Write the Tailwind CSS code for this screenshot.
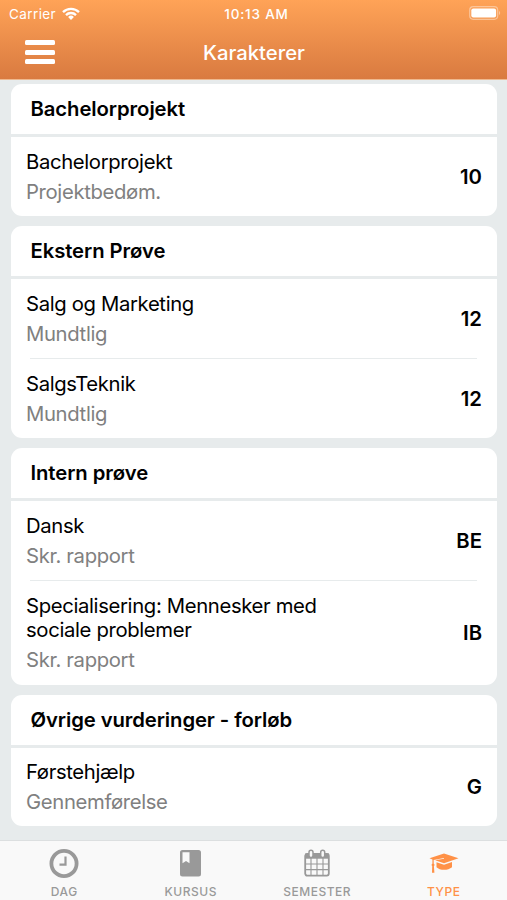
<!DOCTYPE html>
<html lang="da">
<head>
  <meta charset="UTF-8">
  <title>Karakterer</title>
  <script src="https://cdn.jsdelivr.net/npm/@tailwindcss/browser@4"></script>
</head>
<body class="flex h-[900px] w-[507px] flex-col overflow-hidden bg-[#e7ebec] font-['Inter','Liberation_Sans',sans-serif] text-black">

  <!-- Header -->
  <header class="h-20 shrink-0 border-b border-[#efb98f] bg-linear-to-b from-[#ffa357] to-[#d97a40] text-white">
    <div class="grid h-7 grid-cols-3 items-center pr-[6px] pl-[9px] text-[13.5px]">
      <div class="flex items-center gap-[6px]">
        <span class="tracking-[0.4px]">Carrier</span>
        <svg class="-mt-[2px] h-[13px] w-[18px]" viewBox="0 0 18 13" fill="none" stroke="currentColor" stroke-width="2.3">
          <path d="M1 5.1a11.3 11.3 0 0 1 16 0M4 8.1a7 7 0 0 1 10 0"/>
          <path d="M9 13l-2.9-3a4.1 4.1 0 0 1 5.8 0z" fill="currentColor" stroke="none"/>
        </svg>
      </div>
      <span class="pl-[3px] text-center text-[13.5px] font-medium tracking-[0.8px]">10:13 AM</span>
      <svg class="-mt-[2px] h-[14px] w-[32px] justify-self-end" viewBox="0 0 32 14" fill="none">
        <rect x=".7" y=".7" width="28" height="12.6" rx="3.5" stroke="white" stroke-opacity=".4" stroke-width="1.2"/>
        <rect x="2.3" y="2.4" width="24.8" height="9.2" rx="2" fill="white"/>
        <path d="M30 5v4c1.6-.6 1.6-3.4 0-4z" fill="white" fill-opacity=".4"/>
      </svg>
    </div>
    <div class="grid h-12 grid-cols-3 items-center px-[25px]">
      <div class="flex w-[30px] flex-col gap-[4.5px]">
        <span class="h-[5px] rounded-[1.5px] bg-white"></span>
        <span class="h-[5px] rounded-[1.5px] bg-white"></span>
        <span class="h-[5px] rounded-[1.5px] bg-white"></span>
      </div>
      <h1 class="pt-[2px] pl-px text-center text-[20.3px] font-medium">Karakterer</h1>
    </div>
  </header>

  <!-- Grades -->
  <main class="flex flex-1 flex-col gap-[10px] pt-1 pr-[10px] pl-[11px] text-[20.3px]">
    <section class="overflow-hidden rounded-[11px] bg-white">
      <h2 class="flex h-[52.5px] items-center border-b-[3px] border-[#e7ebec] px-[19.5px] font-semibold tracking-[-0.08px]">Bachelorprojekt</h2>
      <div class="flex h-[79.5px] items-center justify-between px-[15px] pt-[2px]">
        <div class="leading-[24.5px] tracking-[-0.35px]">
          <p>Bachelorprojekt</p>
          <p class="mt-[5.5px] text-[#808080]">Projektbedøm.</p>
        </div>
        <span class="font-semibold">10</span>
      </div>
    </section>

    <section class="overflow-hidden rounded-[11px] bg-white">
      <h2 class="flex h-[52.5px] items-center border-b-[3px] border-[#e7ebec] px-[19.5px] font-semibold tracking-[-0.08px]">Ekstern Prøve</h2>
      <div class="flex h-[79.5px] items-center justify-between px-[15px] pt-[2px]">
        <div class="leading-[24.5px] tracking-[-0.35px]">
          <p>Salg og Marketing</p>
          <p class="mt-[5.5px] text-[#808080]">Mundtlig</p>
        </div>
        <span class="font-semibold">12</span>
      </div>
      <div class="mr-5 ml-[19px] h-px bg-[#e7ebec]"></div>
      <div class="flex h-[79px] items-center justify-between px-[15px] pt-px">
        <div class="leading-[24.5px] tracking-[-0.35px]">
          <p>SalgsTeknik</p>
          <p class="mt-[5.5px] text-[#808080]">Mundtlig</p>
        </div>
        <span class="font-semibold">12</span>
      </div>
    </section>

    <section class="overflow-hidden rounded-[11px] bg-white">
      <h2 class="flex h-[52.5px] items-center border-b-[3px] border-[#e7ebec] px-[19.5px] font-semibold tracking-[-0.08px]">Intern prøve</h2>
      <div class="flex h-[79.5px] items-center justify-between px-[15px] pt-[2px]">
        <div class="leading-[24.5px] tracking-[-0.35px]">
          <p>Dansk</p>
          <p class="mt-[5.5px] text-[#808080]">Skr. rapport</p>
        </div>
        <span class="font-semibold">BE</span>
      </div>
      <div class="mr-5 ml-[19px] h-px bg-[#e7ebec]"></div>
      <div class="flex h-[104px] items-center justify-between px-[15px]">
        <div class="leading-[24.5px] tracking-[-0.35px]">
          <p>Specialisering: Mennesker med<br>sociale problemer</p>
          <p class="mt-[5.5px] text-[#808080]">Skr. rapport</p>
        </div>
        <span class="font-semibold">IB</span>
      </div>
    </section>

    <section class="overflow-hidden rounded-[11px] bg-white">
      <h2 class="flex h-[52.5px] items-center border-b-[3px] border-[#e7ebec] px-[19.5px] font-semibold tracking-[-0.1px]">Øvrige vurderinger - forløb</h2>
      <div class="flex h-[78.5px] items-center justify-between px-[15px] pt-px">
        <div class="leading-[24.5px] tracking-[-0.35px]">
          <p>Førstehjælp</p>
          <p class="mt-[5.5px] text-[#808080]">Gennemførelse</p>
        </div>
        <span class="font-semibold">G</span>
      </div>
    </section>
  </main>

  <!-- Tab bar -->
  <nav class="grid h-[60px] shrink-0 grid-cols-4 border-t border-[#dcdfe0] bg-[#f9f9f9] pt-[7px] pl-px text-center text-[12px] font-medium tracking-[0.5px] text-[#999999]">
    <a class="flex flex-col items-center gap-[5px]">
      <svg class="h-[30px] w-[30px]" viewBox="0 0 30 30" fill="none" stroke="currentColor">
        <circle cx="15" cy="15.5" r="12.6" stroke-width="3.8"/>
        <path d="M16.5 8.5v8.2H10.500" stroke-width="2.2"/>
      </svg>
      <span>DAG</span>
    </a>
    <a class="flex flex-col items-center gap-[5px]">
      <svg class="h-[30px] w-[30px]" viewBox="0 0 30 30" fill="currentColor">
        <path fill-rule="evenodd" d="M6.5 2h16a2.5 2.5 0 0 1 2.5 2.5v21.5a2.5 2.5 0 0 1-2.5 2.5H6.5a2.5 2.5 0 0 1-2.5-2.5V4.5a2.5 2.5 0 0 1 2.5-2.5zM6.5 4.2v11l3.5-2.3 3.5 2.3V4.2z"/>
      </svg>
      <span>KURSUS</span>
    </a>
    <a class="flex flex-col items-center gap-[5px]">
      <svg class="h-[30px] w-[30px]" viewBox="0 0 30 30" fill="none" stroke="currentColor">
        <rect x="3.2" y="6" width="23.6" height="21.6" rx="2" stroke-width="1.8"/>
        <path d="M3 5.5h24v5.2H3z" fill="currentColor" stroke="none"/>
        <path d="M9 10v17M15 10v17M21 10v17M3 16h24M3 21.6h24" stroke-width="1.1"/>
        <rect x="7" y="2.2" width="4" height="7.2" rx="2" fill="#f9f9f9" stroke-width="1.5"/>
        <rect x="18.7" y="2.2" width="4" height="7.2" rx="2" fill="#f9f9f9" stroke-width="1.5"/>
      </svg>
      <span>SEMESTER</span>
    </a>
    <a class="flex flex-col items-center gap-[5px] text-[#ff9147]">
      <svg class="h-[30px] w-[30px]" viewBox="0 0 30 30" fill="currentColor">
        <path d="M15 5.5L29.5 10.3 15 15.2l-8.8-3 8.8-1.5v-.8L4.7 11.9v3.7l1 1.3-.8 1.2.5 6.7H3l.2-6.700-.8-1.200 1-1.300v-4.200L.5 10.300z"/>
        <path d="M7.5 14.2l7.5 2.6 8-2.7v5.1c-2 1.7-5 2.6-8 2.6s-5.800-.9-7.500-2.600z"/>
      </svg>
      <span>TYPE</span>
    </a>
  </nav>

</body>
</html>
